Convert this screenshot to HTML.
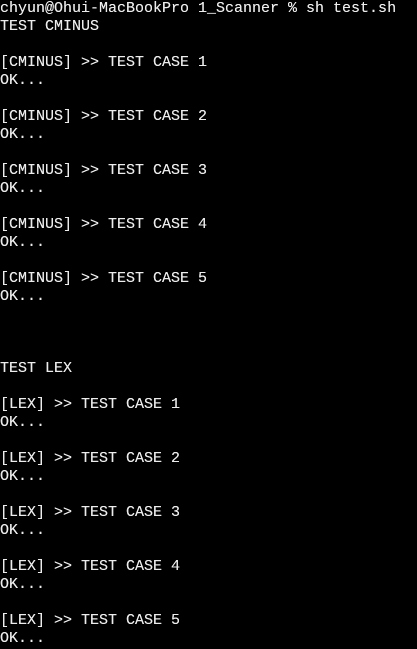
<!DOCTYPE html>
<html><head><style>
html,body{margin:0;padding:0;background:#000;width:417px;height:649px;overflow:hidden}
pre{margin:0;padding:0;font-family:"Liberation Mono",monospace;font-size:15px;line-height:18px;color:#ececec;position:relative;top:0px;text-shadow:0 0 0.3px #fff}
</style></head><body><pre>chyun@Ohui-MacBookPro 1_Scanner % sh test.sh
TEST CMINUS

[CMINUS] &gt;&gt; TEST CASE 1
OK...

[CMINUS] &gt;&gt; TEST CASE 2
OK...

[CMINUS] &gt;&gt; TEST CASE 3
OK...

[CMINUS] &gt;&gt; TEST CASE 4
OK...

[CMINUS] &gt;&gt; TEST CASE 5
OK...



TEST LEX

[LEX] &gt;&gt; TEST CASE 1
OK...

[LEX] &gt;&gt; TEST CASE 2
OK...

[LEX] &gt;&gt; TEST CASE 3
OK...

[LEX] &gt;&gt; TEST CASE 4
OK...

[LEX] &gt;&gt; TEST CASE 5
OK...</pre></body></html>
